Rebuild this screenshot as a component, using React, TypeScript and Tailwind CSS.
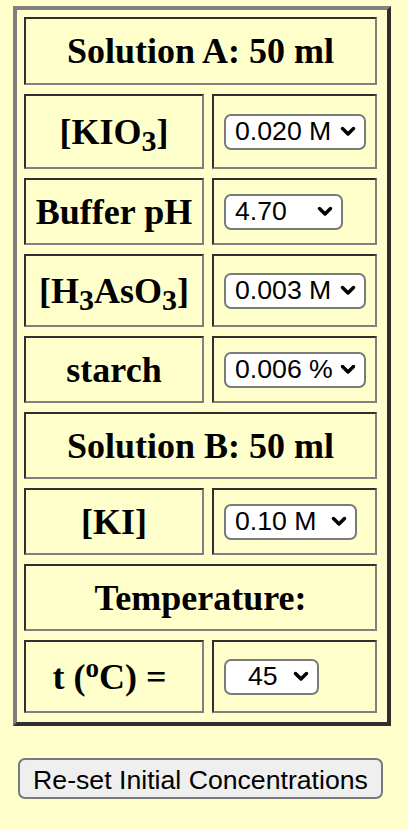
import type { ReactNode } from "react";

const cellBorder =
  "border-2 border-t-[#2f2f2f] border-l-[#2f2f2f] border-r-[#808080] border-b-[#808080]";
const labelFont = "font-['Liberation_Serif','Times_New_Roman',serif] text-[36px] font-bold text-black";
const controlFont = "font-['Liberation_Sans',Arial,sans-serif] text-[26.67px] text-black";

function Chevron() {
  return (
    <svg
      width="16"
      height="11"
      viewBox="0 0 16 11"
      className="pointer-events-none absolute right-[10px] top-[12px]"
    >
      <polyline points="2.5,2.5 8,8 13.5,2.5" fill="none" stroke="#000" strokeWidth="3.5" strokeLinecap="round" strokeLinejoin="round" />
    </svg>
  );
}

function Dropdown({ options, value, width, pad = "pl-[9px]" }: { options: string[]; value: string; width: string; pad?: string }) {
  return (
    <div className={`relative ${width}`}>
      <select
        defaultValue={value}
        className={`h-[36px] w-full appearance-none rounded-[7px] border-2 border-[#7a7a7a] bg-white py-0 ${pad} pr-[30px] leading-none outline-none ${controlFont}`}
      >
        {options.map((o) => (
          <option key={o} value={o}>
            {o}
          </option>
        ))}
      </select>
      <Chevron />
    </div>
  );
}

function Header({ children, h }: { children: ReactNode; h: string }) {
  return <div className={`col-span-2 flex items-center justify-center ${h} ${cellBorder} ${labelFont}`}>{children}</div>;
}

function Row({ label, h, children }: { label: ReactNode; h: string; children: ReactNode }) {
  return (
    <>
      <div className={`flex items-center justify-center ${h} ${cellBorder} ${labelFont}`}>{label}</div>
      <div className={`flex items-center pl-[10px] ${h} ${cellBorder}`}>{children}</div>
    </>
  );
}

export default function App() {
  return (
    <div className="min-h-screen bg-[#ffffcc] pl-[13px] pt-[6px]">
      <div className="w-[378px] border-4 border-t-[#808080] border-l-[#808080] border-r-[#2f2f2f] border-b-[#2f2f2f] pb-[9px] pl-[7px] pr-[10px] pt-[7px]">
        <div className="grid grid-cols-[180px_165px] gap-x-2 gap-y-[9px]">
          <Header h="h-[68px]">Solution A: 50 ml</Header>
          <Row
            h="h-[75px]"
            label={
              <span>
                [KIO<sub className="text-[30px]">3</sub>]
              </span>
            }
          >
            <Dropdown width="w-[142px]" value="0.020 M" options={["0.010 M", "0.020 M", "0.030 M", "0.040 M"]} />
          </Row>
          <Row h="h-[67px]" label="Buffer pH">
            <Dropdown width="w-[119px]" value="4.70" options={["4.70", "5.00", "5.30"]} />
          </Row>
          <Row
            h="h-[73px]"
            label={
              <span>
                [H<sub className="text-[30px]">3</sub>AsO<sub className="text-[30px]">3</sub>]
              </span>
            }
          >
            <Dropdown width="w-[142px]" value="0.003 M" options={["0.001 M", "0.002 M", "0.003 M", "0.004 M"]} />
          </Row>
          <Row h="h-[67px]" label="starch">
            <Dropdown width="w-[142px]" value="0.006 %" options={["0.002 %", "0.004 %", "0.006 %", "0.008 %"]} />
          </Row>
          <Header h="h-[67px]">Solution B: 50 ml</Header>
          <Row h="h-[67px]" label="[KI]">
            <Dropdown width="w-[133px]" value="0.10 M" options={["0.05 M", "0.10 M", "0.15 M", "0.20 M"]} />
          </Row>
          <Header h="h-[67px]">Temperature:</Header>
          <Row
            h="h-[73px]"
            label={
              <span>
                t (<sup className="top-[-12px] text-[27px]">o</sup>C) =&nbsp;
              </span>
            }
          >
            <Dropdown width="w-[95px]" pad="pl-[22px]" value="45" options={["25", "35", "45", "55"]} />
          </Row>
        </div>
      </div>
      <button
        type="button"
        className={`ml-[5px] mt-[32px] h-[41px] w-[365px] rounded-[7px] border-2 border-[#7a7a7a] bg-[#efefef] ${controlFont}`}
      >
        Re-set Initial Concentrations
      </button>
    </div>
  );
}
